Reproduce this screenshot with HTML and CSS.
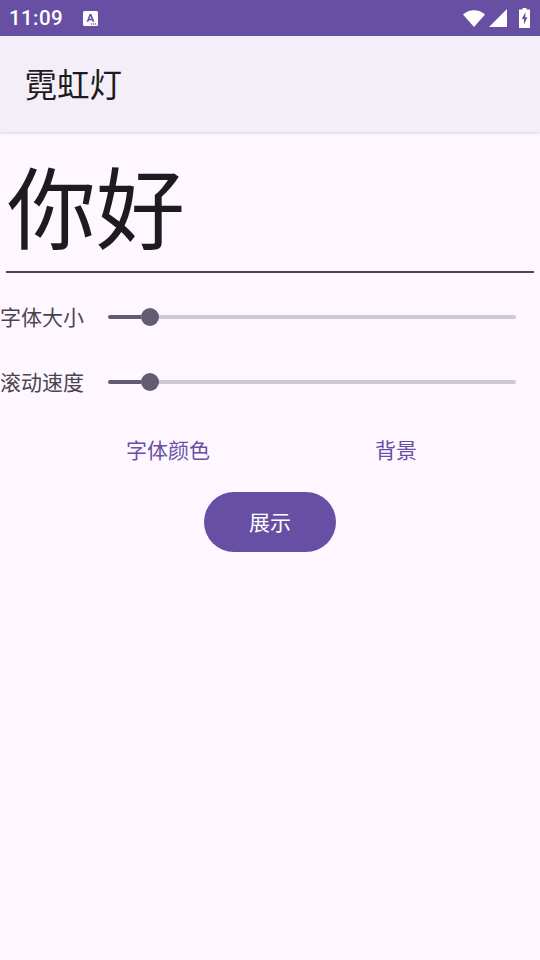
FILE: index.html
```html
<!DOCTYPE html>
<html lang="zh">
<head>
<meta charset="utf-8">
<title>霓虹灯</title>
<link rel="stylesheet" href="styles.css">
</head>
<body>
<div class="status">
  <span class="time">11:09</span>
  <svg class="notif" width="15" height="15" viewBox="0 0 15 15"><rect x="0" y="0" width="15" height="15" rx="1.5" fill="#fff"/><path d="M3.6 10.8 L6.6 3 H8.4 L11.4 10.8 H9.6 L9 9.2 H6 L5.4 10.8 Z M6.5 7.8 H8.5 L7.5 5 Z" fill="#6750a4"/><rect x="8" y="12.4" width="1.2" height="1.2" fill="#6750a4"/><rect x="10" y="12.4" width="1.2" height="1.2" fill="#6750a4"/><rect x="12" y="12.4" width="1.2" height="1.2" fill="#6750a4"/></svg>
  <span class="spacer"></span>
  <svg class="wifi" width="22" height="17" viewBox="0 0 22 17"><path d="M0 4.5 C6 -1.2 16 -1.2 22 4.5 L11 17 Z" fill="#fff"/></svg>
  <svg class="signal" width="18" height="18" viewBox="0 0 18 18"><path d="M18 0 V18 H0 Z" fill="#fff"/></svg>
  <svg class="battery" width="11" height="20" viewBox="0 0 11 20"><path d="M3.5 0 H7.5 V1.5 H11 V20 H0 V1.5 H3.5 Z" fill="#fff"/><path d="M6.5 4 L2.8 11 H5 V16.5 L8.4 9.3 H6.2 Z" fill="#6750a4"/></svg>
</div>
<header class="appbar"><h1 class="title">霓虹灯</h1></header>
<main class="content">
  <div class="field"><span class="field-text">你好</span></div>
  <div class="row row-first">
    <span class="label">字体大小</span>
    <div class="slider"><span class="active"></span><span class="thumb"></span><span class="inactive"></span></div>
  </div>
  <div class="row">
    <span class="label">滚动速度</span>
    <div class="slider"><span class="active"></span><span class="thumb"></span><span class="inactive"></span></div>
  </div>
  <div class="text-buttons">
    <button class="text-btn first">字体颜色</button>
    <button class="text-btn second">背景</button>
  </div>
  <div class="cta"><button class="filled">展示</button></div>
</main>
</body>
</html>
```
FILE: styles.css
```css
* { box-sizing: border-box; }
html, body { margin: 0; height: 100%; }
body {
  width: 540px;
  height: 960px;
  background: #fef7ff;
  font-family: "Noto Sans CJK SC", "Noto Sans", sans-serif;
  color: #1d1b20;
  overflow: hidden;
}
.status {
  height: 36px;
  background: #6750a4;
  display: flex;
  align-items: center;
  padding: 0 10px 0 9px;
  color: #fff;
}
.time { font: 500 20.5px/36px Roboto, sans-serif; letter-spacing: 0.4px; }
.notif { margin-left: 20px; }
.spacer { flex: 1; }
.wifi { margin-right: 4px; }
.signal { margin-right: 12px; }
.appbar {
  height: 96px;
  background: #f3eef8;
  display: flex;
  align-items: center;
  padding-left: 24.5px;
  box-shadow: 0 1px 3px rgba(0,0,0,.16);
  position: relative;
}
.title { margin: 0 0 1px; font-weight: 400; font-size: 32.5px; line-height: 1; }
.content { display: flex; flex-direction: column; }
.field {
  margin: 0 6px;
  height: 141px;
  border-bottom: 2px solid #49454f;
  display: flex;
  align-items: center;
}
.field-text { font-size: 89px; line-height: 1; margin-left: 1px; margin-top: 4px; }
.row { display: flex; align-items: center; height: 65px; }
.row-first { margin-top: 11px; }
.label { font-size: 21px; line-height: 1; width: 108px; color: #49454f; }
.slider { width: 408px; display: flex; align-items: center; height: 18px; }
.active { width: 33px; height: 4px; background: #625b71; border-radius: 2px 0 0 2px; }
.thumb { width: 18px; height: 18px; border-radius: 50%; background: #625b71; flex: none; z-index: 1; }
.inactive { flex: 1; height: 4px; background: #cdc8d1; border-radius: 0 2px 2px 0; margin-left: -2px; }
.text-buttons { display: flex; margin-top: 12px; height: 50px; padding-bottom: 3px; align-items: center; }
.text-btn {
  background: none;
  border: 0;
  padding: 0;
  font-family: inherit;
  font-size: 21px;
  line-height: 1;
  color: #6750a4;
}
.first { margin-left: 126px; }
.second { margin-left: 165px; }
.cta { display: flex; justify-content: center; margin-top: 16px; }
.filled {
  width: 132px;
  height: 60px;
  border: 0;
  border-radius: 30px;
  padding: 0 0 2px;
  background: #6750a4;
  color: #fff;
  font-family: inherit;
  font-size: 21px;
  line-height: 1;
}
```
